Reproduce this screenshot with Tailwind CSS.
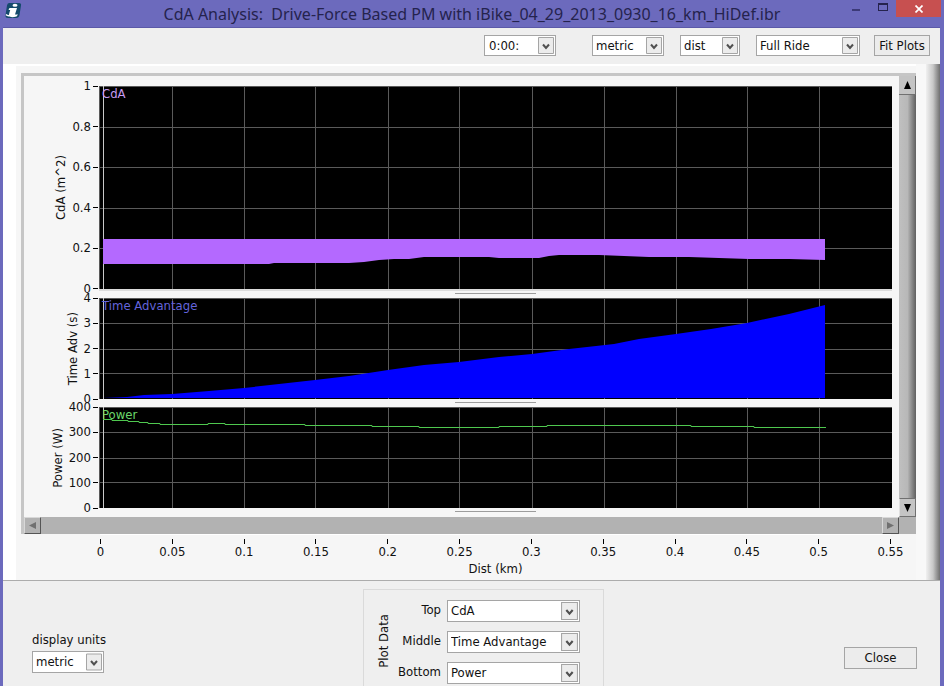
<!DOCTYPE html>
<html lang="en">
<head>
    <meta charset="UTF-8">
    <meta name="viewport" content="width=device-width, initial-scale=1.0">
    <title>CdA Analysis</title>
    <script src="https://cdn.jsdelivr.net/npm/@tailwindcss/browser@4"></script>
</head>
<body class="min-h-screen flex flex-col bg-[#6c6abd] font-['DejaVu_Sans_Condensed','Noto_Sans',sans-serif] text-[13px] leading-[14px] text-[#111]">
    <!-- Title bar -->
    <header class="relative h-[27px] shrink-0 flex items-center justify-center">
        <svg class="absolute left-[5px] top-[2px] w-[17px] h-[17px]" viewBox="0 0 17 17">
            <path d="M4 1h10q2.500 0 2 2.500L14.500 13q-.5 3-3.500 3H3Q0 16 .5 13L2 3.500Q2.300 1 4 1Z" fill="#154a6c"/>
            <ellipse cx="10" cy="3.300" rx="2.500" ry="1.500" fill="#fff"/>
            <path d="M4.500 6h7.500L10 12.500h3L11.500 14.500q-6 1.500-7.500-.5-.3-.8.200-2.500L5.200 8H3.500Z" fill="#fff"/>
            <path d="M1 12.500q2 2 5 .5" stroke="#fff" stroke-width="1.500" fill="none"/>
        </svg>
        <h1 class="font-['Noto_Sans',sans-serif] text-[16px] leading-5 text-[#25234d] whitespace-pre">CdA Analysis:  Drive-Force Based PM with iBike_04_29_2013_0930_16_km_HiDef.ibr</h1>
        <div class="absolute right-[3px] top-0 flex h-[17px]">
            <button aria-label="Minimize" class="w-[27px] flex justify-center pt-[9px]"><span class="w-2 h-[2px] bg-[#3c3a78]"></span></button>
            <button aria-label="Maximize" class="w-[27px] flex justify-center pt-[3px]"><span class="w-[10px] h-2 border border-t-2 border-[#25234d]"></span></button>
            <button aria-label="Close window" class="w-[45px] bg-[#c75050] flex items-center justify-center">
                <svg class="w-2 h-2" viewBox="0 0 8 8"><path d="M.5.5l7 7M7.500.5l-7 7" stroke="#fff" stroke-width="1.700"/></svg>
            </button>
        </div>
    </header>

    <main class="flex-1 flex flex-col ml-[3px] mr-1 bg-[#efefef] border-t border-[#5b59a8]">
        <!-- Toolbar -->
        <div class="h-9 flex items-start justify-end gap-4 pt-[7px] pr-[10px]">
            <div class="relative w-[72px] mr-5">
                <select aria-label="Time" class="appearance-none w-full h-[21px] bg-white border border-[#a5a5a5] pl-1"><option>0:00:</option></select>
                <svg class="absolute right-[2px] top-[2px] w-4 h-[17px] pointer-events-none" viewBox="0 0 16 17"><path d="M.5.5h15v16H.5z" fill="#ececec" stroke="#a5a5a5"/><path d="M5 7.500l3 3.500 3-3.500" fill="none" stroke="#505050" stroke-width="2"/></svg>
            </div>
            <div class="relative w-[72px]">
                <select aria-label="Units" class="appearance-none w-full h-[21px] bg-white border border-[#a5a5a5] pl-[3px]"><option>metric</option></select>
                <svg class="absolute right-[2px] top-[2px] w-4 h-[17px] pointer-events-none" viewBox="0 0 16 17"><path d="M.5.5h15v16H.5z" fill="#ececec" stroke="#a5a5a5"/><path d="M5 7.500l3 3.500 3-3.500" fill="none" stroke="#505050" stroke-width="2"/></svg>
            </div>
            <div class="relative w-[60px]">
                <select aria-label="X axis" class="appearance-none w-full h-[21px] bg-white border border-[#a5a5a5] pl-[3px]"><option>dist</option></select>
                <svg class="absolute right-[2px] top-[2px] w-4 h-[17px] pointer-events-none" viewBox="0 0 16 17"><path d="M.5.5h15v16H.5z" fill="#ececec" stroke="#a5a5a5"/><path d="M5 7.500l3 3.500 3-3.500" fill="none" stroke="#505050" stroke-width="2"/></svg>
            </div>
            <div class="relative w-[104px]">
                <select aria-label="Range" class="appearance-none w-full h-[21px] bg-white border border-[#a5a5a5] pl-[3px]"><option>Full Ride</option></select>
                <svg class="absolute right-[2px] top-[2px] w-4 h-[17px] pointer-events-none" viewBox="0 0 16 17"><path d="M.5.5h15v16H.5z" fill="#ececec" stroke="#a5a5a5"/><path d="M5 7.500l3 3.500 3-3.500" fill="none" stroke="#505050" stroke-width="2"/></svg>
            </div>
            <button class="w-14 h-[21px] -ml-[2px] border border-[#a5a5a5] bg-[#ececec] whitespace-nowrap">Fit Plots</button>
        </div>

        <!-- Plots -->
        <div class="flex bg-white border-b border-[#acacac]">
            <div class="flex-1 ml-[13px] mt-[2px] bg-[#f6f6f6]">
                <div class="mt-[7px] ml-[5px] border-l-[3px] border-t-[3px] border-[#c6c6c6]">
                    <div class="flex">
                        <div class="flex-1 pt-[10px] pr-[7px]">
                            <section class="flex">
                                <div class="w-[75px] flex items-center justify-end gap-1">
                                    <h2 class="[writing-mode:vertical-rl] rotate-180 whitespace-nowrap">CdA (m^2)</h2>
                                    <ul class="self-stretch -my-[7px] flex flex-col justify-between pr-px">
                                        <li class="flex items-center justify-end gap-[2px]">1<i class="w-[5px] h-px bg-black"></i></li>
                                        <li class="flex items-center justify-end gap-[2px]">0.8<i class="w-[5px] h-px bg-black"></i></li>
                                        <li class="flex items-center justify-end gap-[2px]">0.6<i class="w-[5px] h-px bg-black"></i></li>
                                        <li class="flex items-center justify-end gap-[2px]">0.4<i class="w-[5px] h-px bg-black"></i></li>
                                        <li class="flex items-center justify-end gap-[2px]">0.2<i class="w-[5px] h-px bg-black"></i></li>
                                        <li class="flex items-center justify-end gap-[2px]">0<i class="w-[5px] h-px bg-black"></i></li>
                                    </ul>
                                </div>
                                <div class="relative flex-1 bg-black">
                                    <svg class="w-full h-[203px]" viewBox="0 0 793 203" preserveAspectRatio="none">
                                        <path d="M73.500 0v203M145.500 0v203M216.500 0v203M289.500 0v203M360.500 0v203M433.500 0v203M505.500 0v203M577.500 0v203M648.500 0v203M720.500 0v203M0 41.500h793M0 81.500h793M0 122.500h793M0 162.500h793M0 .5h793M.5 0v203" stroke="#5a5a5a" fill="none"/>
                                        <path d="M4.500 0v203" stroke="#c8c8c8"/>
                                        <path d="M4 153H726V174L690 173H650L590 171H550L500 169H460L450 170 440 172H400L390 171H325L310 173H295L280 174 265 176 250 177H175L170 178H4Z" fill="#b469ff"/>
                                    </svg>
                                    <span class="absolute left-[3px] top-px text-[#c79bf0]">CdA</span>
                                </div>
                            </section>
                            <div class="h-[9px] ml-[75px] border-t-2 border-[#dcdcdc] pt-[2px]"><div class="w-[81px] h-px mx-auto bg-[#9c9c9c]"></div></div>

                            <section class="flex">
                                <div class="w-[75px] flex items-center justify-end gap-1">
                                    <h2 class="[writing-mode:vertical-rl] rotate-180 whitespace-nowrap">Time Adv (s)</h2>
                                    <ul class="self-stretch -my-[7px] flex flex-col justify-between pr-px">
                                        <li class="flex items-center justify-end gap-[2px]">4<i class="w-[5px] h-px bg-black"></i></li>
                                        <li class="flex items-center justify-end gap-[2px]">3<i class="w-[5px] h-px bg-black"></i></li>
                                        <li class="flex items-center justify-end gap-[2px]">2<i class="w-[5px] h-px bg-black"></i></li>
                                        <li class="flex items-center justify-end gap-[2px]">1<i class="w-[5px] h-px bg-black"></i></li>
                                        <li class="flex items-center justify-end gap-[2px]">0<i class="w-[5px] h-px bg-black"></i></li>
                                    </ul>
                                </div>
                                <div class="relative flex-1 bg-black">
                                    <svg class="w-full h-[101px]" viewBox="0 0 793 101" preserveAspectRatio="none">
                                        <path d="M73.500 0v101M145.500 0v101M216.500 0v101M289.500 0v101M360.500 0v101M433.500 0v101M505.500 0v101M577.500 0v101M648.500 0v101M720.500 0v101M0 25.500h793M0 51.500h793M0 75.500h793M0 .5h793M.5 0v101" stroke="#5a5a5a" fill="none"/>
                                        <path d="M4.500 0v101" stroke="#c8c8c8"/>
                                        <path d="M4 100L28 99 45 97 73 96 110 93 145 90 180 86 216 82 250 78 289 72 325 67 360 64 400 59 433 56 470 51 515 46 540 41 577 36 612 31 648 25 690 16 726 7V100Z" fill="#0000ff"/>
                                    </svg>
                                    <span class="absolute left-[3px] top-px text-[#6464dc]">Time Advantage</span>
                                </div>
                            </section>
                            <div class="h-2 ml-[75px] pt-[3px]"><div class="w-[81px] h-px mx-auto bg-[#9c9c9c]"></div></div>

                            <section class="flex">
                                <div class="w-[75px] flex items-center justify-end gap-1">
                                    <h2 class="[writing-mode:vertical-rl] rotate-180 whitespace-nowrap">Power (W)</h2>
                                    <ul class="self-stretch -my-[7px] flex flex-col justify-between pr-px">
                                        <li class="flex items-center justify-end gap-[2px]">400<i class="w-[5px] h-px bg-black"></i></li>
                                        <li class="flex items-center justify-end gap-[2px]">300<i class="w-[5px] h-px bg-black"></i></li>
                                        <li class="flex items-center justify-end gap-[2px]">200<i class="w-[5px] h-px bg-black"></i></li>
                                        <li class="flex items-center justify-end gap-[2px]">100<i class="w-[5px] h-px bg-black"></i></li>
                                        <li class="flex items-center justify-end gap-[2px]">0<i class="w-[5px] h-px bg-black"></i></li>
                                    </ul>
                                </div>
                                <div class="relative flex-1 bg-black">
                                    <svg class="w-full h-[101px]" viewBox="0 0 793 101" preserveAspectRatio="none">
                                        <path d="M73.500 0v101M145.500 0v101M216.500 0v101M289.500 0v101M360.500 0v101M433.500 0v101M505.500 0v101M577.500 0v101M648.500 0v101M720.500 0v101M0 25.500h793M0 51.500h793M0 75.500h793M0 .5h793M.5 0v101" stroke="#5a5a5a" fill="none"/>
                                        <path d="M4.500 0v101" stroke="#c8c8c8"/>
                                        <path d="M4 12.500H13V13.500H29V14.500H40V15.500H49V16.500H61V17.500H109V16.500H126V17.500H206V18.500H273V19.500H320V20.500H400V19.500H448V18.500H592V19.500H655V20.500H727" stroke="#4fc84f" fill="none"/>
                                    </svg>
                                    <span class="absolute left-[3px] top-px text-[#6ad66a]">Power</span>
                                </div>
                            </section>
                            <div class="h-[9px] ml-[75px] pt-[3px]"><div class="w-[81px] h-px mx-auto bg-[#9c9c9c]"></div></div>
                        </div>

                        <div class="w-[17px] flex flex-col bg-linear-to-r from-[#c0c0c0] via-[#b8b8b8] to-[#606060]">
                            <button aria-label="Scroll up" class="h-[19px] flex items-center justify-center bg-[#c4c4c4] border-r border-b border-[#707070]">
                                <svg class="w-[7px] h-2" viewBox="0 0 7 8"><path d="M3.500 0L7 8H0Z"/></svg>
                            </button>
                            <div class="flex-1"></div>
                            <button aria-label="Scroll down" class="h-[19px] flex items-center justify-center bg-[#c4c4c4] border border-[#707070] border-l-[#e0e0e0]">
                                <svg class="w-[7px] h-2" viewBox="0 0 7 8"><path d="M0 0H7L3.500 8Z"/></svg>
                            </button>
                        </div>
                    </div>
                    <div class="h-[17px] flex bg-[#b2b2b2] pr-[17px] justify-between">
                        <button aria-label="Scroll left" class="w-[17px] flex items-center justify-center border border-[#d8d8d8] border-r-[#555] border-b-[#555]">
                            <svg class="w-[7px] h-[7px]" viewBox="0 0 7 7"><path d="M0 3.500L7 0V7Z" fill="#707070"/></svg>
                        </button>
                        <button aria-label="Scroll right" class="w-[17px] flex items-center justify-center border border-[#d8d8d8] border-r-[#555] border-b-[#555]">
                            <svg class="w-[7px] h-[7px]" viewBox="0 0 7 7"><path d="M0 0L7 3.500 0 7Z" fill="#707070"/></svg>
                        </button>
                    </div>
                </div>

                <!-- Shared distance axis -->
                <div class="ml-[84px] mr-[25px] py-1 border-t border-white">
                    <ul class="flex justify-between">
                        <li class="w-px flex flex-col items-center gap-px"><i class="w-px h-[5px] bg-black"></i>0</li>
                        <li class="w-px flex flex-col items-center gap-px"><i class="w-px h-[5px] bg-black"></i>0.05</li>
                        <li class="w-px flex flex-col items-center gap-px"><i class="w-px h-[5px] bg-black"></i>0.1</li>
                        <li class="w-px flex flex-col items-center gap-px"><i class="w-px h-[5px] bg-black"></i>0.15</li>
                        <li class="w-px flex flex-col items-center gap-px"><i class="w-px h-[5px] bg-black"></i>0.2</li>
                        <li class="w-px flex flex-col items-center gap-px"><i class="w-px h-[5px] bg-black"></i>0.25</li>
                        <li class="w-px flex flex-col items-center gap-px"><i class="w-px h-[5px] bg-black"></i>0.3</li>
                        <li class="w-px flex flex-col items-center gap-px"><i class="w-px h-[5px] bg-black"></i>0.35</li>
                        <li class="w-px flex flex-col items-center gap-px"><i class="w-px h-[5px] bg-black"></i>0.4</li>
                        <li class="w-px flex flex-col items-center gap-px"><i class="w-px h-[5px] bg-black"></i>0.45</li>
                        <li class="w-px flex flex-col items-center gap-px"><i class="w-px h-[5px] bg-black"></i>0.5</li>
                        <li class="w-px flex flex-col items-center gap-px"><i class="w-px h-[5px] bg-black"></i>0.55</li>
                    </ul>
                    <p class="text-center mt-[3px]">Dist (km)</p>
                </div>
            </div>
            <div class="w-[10px] bg-[#f8f8f8]"></div>
            <div class="w-[14px] bg-linear-to-r from-[#f0f0f0] via-[#c8c8c8] to-[#707070]"></div>
        </div>

        <!-- Display settings -->
        <div class="flex-1 flex">
            <div class="w-[360px] pl-[29px] pt-[52px]">
                <label for="units" class="block">display units</label>
                <div class="relative w-[72px] mt-1">
                    <select id="units" class="appearance-none w-full h-[22px] bg-white border border-[#a5a5a5] pl-[3px]"><option>metric</option></select>
                    <svg class="absolute right-[2px] top-[2px] w-4 h-[18px] pointer-events-none" viewBox="0 0 16 17"><path d="M.5.5h15v16H.5z" fill="#ececec" stroke="#a5a5a5"/><path d="M5 7.500l3 3.500 3-3.500" fill="none" stroke="#505050" stroke-width="2"/></svg>
                </div>
            </div>
            <div class="w-[241px] mt-2 pt-[10px] pl-[13px] pr-[23px] flex items-start justify-between border border-b-0 border-[#dadada]">
                <h2 class="[writing-mode:vertical-rl] rotate-180 mt-[14px] whitespace-nowrap">Plot Data</h2>
                <div class="grid grid-cols-[auto_133px] gap-x-[6px] gap-y-[9px] text-right">
                    <label for="top" class="pt-[3px]">Top</label>
                    <div class="relative">
                        <select id="top" class="appearance-none w-full h-[22px] bg-white border border-[#a5a5a5] pl-[3px]"><option>CdA</option></select>
                        <svg class="absolute right-[2px] top-[2px] w-[17px] h-[18px] pointer-events-none" viewBox="0 0 16 17"><path d="M.5.5h15v16H.5z" fill="#ececec" stroke="#a5a5a5"/><path d="M5 7.500l3 3.500 3-3.500" fill="none" stroke="#505050" stroke-width="2"/></svg>
                    </div>
                    <label for="middle" class="pt-[3px]">Middle</label>
                    <div class="relative">
                        <select id="middle" class="appearance-none w-full h-[22px] bg-white border border-[#a5a5a5] pl-[3px]"><option>Time Advantage</option></select>
                        <svg class="absolute right-[2px] top-[2px] w-[17px] h-[18px] pointer-events-none" viewBox="0 0 16 17"><path d="M.5.5h15v16H.5z" fill="#ececec" stroke="#a5a5a5"/><path d="M5 7.500l3 3.500 3-3.500" fill="none" stroke="#505050" stroke-width="2"/></svg>
                    </div>
                    <label for="bottom" class="pt-[3px]">Bottom</label>
                    <div class="relative">
                        <select id="bottom" class="appearance-none w-full h-[22px] bg-white border border-[#a5a5a5] pl-[3px]"><option>Power</option></select>
                        <svg class="absolute right-[2px] top-[2px] w-[17px] h-[18px] pointer-events-none" viewBox="0 0 16 17"><path d="M.5.5h15v16H.5z" fill="#ececec" stroke="#a5a5a5"/><path d="M5 7.500l3 3.500 3-3.500" fill="none" stroke="#505050" stroke-width="2"/></svg>
                    </div>
                </div>
            </div>
            <div class="flex-1 flex justify-end items-start pt-[66px] pr-[23px]">
                <button class="w-[73px] h-[22px] border border-[#a5a5a5] bg-[#ececec]">Close</button>
            </div>
        </div>
    </main>
</body>
</html>
